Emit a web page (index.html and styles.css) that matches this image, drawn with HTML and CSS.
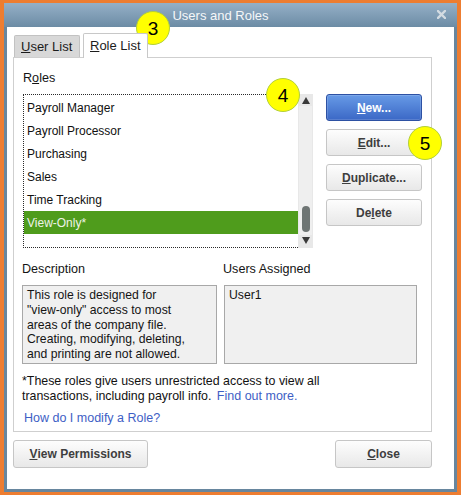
FILE: index.html
```html
<!DOCTYPE html>
<html>
<head>
<meta charset="utf-8">
<link rel="stylesheet" href="styles.css">
</head>
<body>
<div class="window">
  <div class="titlebar">
    <span class="title">Users and Roles</span>
    <svg class="close" width="9" height="9" viewBox="0 0 9 9"><path d="M1 1L8 8M8 1L1 8" stroke="#d3dbe2" stroke-width="2.4" stroke-linecap="square"/></svg>
  </div>
  <div class="content">
    <div class="tabs">
      <div class="tab"><u>U</u>ser List</div>
      <div class="tab active"><u>R</u>ole List</div>
    </div>
    <div class="panel">
      <div class="roles">
        <div class="roles-left">
          <div class="label">R<u>o</u>les</div>
          <div class="listbox">
            <div class="items">
              <div class="item">Payroll Manager</div>
              <div class="item">Payroll Processor</div>
              <div class="item">Purchasing</div>
              <div class="item">Sales</div>
              <div class="item">Time Tracking</div>
              <div class="item selected">View-Only*</div>
            </div>
            <div class="scrollbar">
              <div class="arrow up"></div>
              <div class="track"><div class="thumb"></div></div>
              <div class="arrow down"></div>
            </div>
          </div>
        </div>
        <div class="buttons">
          <div class="btn primary"><u>N</u>ew...</div>
          <div class="btn"><u>E</u>dit...</div>
          <div class="btn"><u>D</u>uplicate...</div>
          <div class="btn">De<u>l</u>ete</div>
        </div>
      </div>
      <div class="details">
        <div class="label">Description</div>
        <div class="label label2">Users Assigned</div>
        <div class="box">This role is designed for<br>"view-only" access to most<br>areas of the company file.<br>Creating, modifying, deleting,<br>and printing are not allowed.</div>
        <div class="box">User1</div>
      </div>
      <p class="note">*These roles give users unrestricted access to view all<br>transactions, including payroll info. <a class="link">Find out more.</a></p>
      <div class="help"><a class="link">How do I modify a Role?</a></div>
    </div>
    <div class="footer">
      <div class="btn wide"><u>V</u>iew Permissions</div>
      <div class="btn"><u>C</u>lose</div>
    </div>
  </div>
  <div class="callout c3">3</div>
  <div class="callout c4">4</div>
  <div class="callout c5">5</div>
</div>
</body>
</html>
```
FILE: styles.css
```css
* { box-sizing: border-box; }
html, body { margin: 0; padding: 0; }
body {
  background: #ed7d31;
  width: 461px;
  height: 495px;
  overflow: hidden;
  font-family: "Liberation Sans", Arial, sans-serif;
  font-size: 12px;
  color: #141414;
}
.window {
  position: relative;
  margin: 3px 4px 0 4px;
  width: 453px;
  height: 489px;
  background: #67869e;
  display: flex;
  flex-direction: column;
}
.titlebar {
  height: 24px;
  background: linear-gradient(#95b0c7, #6c8ca5);
  display: flex;
  align-items: center;
  justify-content: center;
  position: relative;
  padding-right: 20px;
}
.title {
  color: #f5f7f9;
  font-size: 13px;
}
.close {
  position: absolute;
  left: 433px;
  top: 7px;
}
.content {
  flex: 1;
  margin: 0 3px 3px 3px;
  background: #ffffff;
  padding: 6px 0 0 6px;
}
.tabs {
  display: flex;
  align-items: flex-end;
  gap: 3px;
  margin-left: 1px;
  height: 24px;
  position: relative;
  z-index: 1;
}
.tab {
  height: 22px;
  width: 66px;
  border: 1px solid #c2c2c2;
  border-bottom: none;
  border-radius: 2px 2px 0 0;
  background: #d8d8d8;
  font-size: 13px;
  line-height: 21px;
  padding-left: 6px;
  color: #1c1c1c;
}
.tab.active {
  height: 25px;
  width: 65px;
  margin-bottom: -1px;
  background: #ffffff;
  border-color: #c8c8c8;
  line-height: 24px;
}
.panel {
  width: 419px;
  height: 375px;
  border: 1px solid #cfcfcf;
  padding: 13px 0 0 8px;
}
.label {
  font-size: 12.6px;
  line-height: 15px;
  color: #141414;
}
.roles {
  display: flex;
}
.roles-left {
  width: 291px;
}
.roles-left .label {
  padding-left: 1px;
  margin-bottom: 8px;
}
.listbox {
  margin-left: 1px;
  width: 290px;
  height: 154px;
  display: flex;
}
.items {
  flex: 1;
  border: 1px dotted #2a2a2a;
  border-right: none;
  padding-top: 1px;
}
.item {
  height: 23px;
  line-height: 24px;
  padding-left: 3px;
  color: #101010;
}
.item.selected {
  background: #4f9c1c;
  color: #eef3e8;
}
.scrollbar {
  width: 15px;
  background: #e8e8e8;
  display: flex;
  flex-direction: column;
  align-items: center;
  padding: 3px 0 4px;
}
.arrow {
  width: 0;
  height: 0;
  border-left: 4px solid transparent;
  border-right: 4px solid transparent;
}
.arrow.up { border-bottom: 7px solid #3a3a3a; }
.arrow.down { border-top: 7px solid #3a3a3a; }
.track {
  flex: 1;
  width: 13px;
  background: #efefef;
  display: flex;
  flex-direction: column;
  justify-content: flex-end;
  align-items: center;
  padding: 2px 0 3px;
  margin: 2px 0;
}
.thumb {
  width: 8px;
  height: 26px;
  border-radius: 4px;
  background: #6e7574;
}
.buttons {
  margin-left: 13px;
  padding-top: 23px;
  display: flex;
  flex-direction: column;
  gap: 8px;
}
.btn {
  width: 96px;
  height: 27px;
  border: 1px solid #c6c6c6;
  border-radius: 3px;
  background: linear-gradient(#fdfdfd, #e8e8e8);
  display: flex;
  align-items: center;
  justify-content: center;
  font-weight: bold;
  font-size: 12px;
  color: #3e3e3e;
}
.btn.primary {
  background: linear-gradient(#679ae6, #3b68c6);
  border-color: #2d51a3;
  color: #ffffff;
  box-shadow: inset 0 0 0 1px rgba(255,255,255,0.15);
}
.details {
  margin-top: 14px;
  display: grid;
  grid-template-columns: 195px 193px;
  column-gap: 7px;
}
.details .label {
  margin-bottom: 8px;
}
.label2 { margin-left: -1px; }
.box {
  height: 79px;
  border: 1px solid #a8a8a8;
  background: #f0f0f0;
  padding: 2px 4px;
  line-height: 14.8px;
  font-size: 12.2px;
  color: #141414;
}
.note {
  margin: 10px 0 0 0;
  line-height: 15.3px;
  font-size: 12.4px;
  color: #111;
}
.link {
  color: #3e5ec5;
  margin-left: 2px;
  font-size: 12.5px;
}
.help {
  margin-top: 6px;
  line-height: 15px;
}
.help .link { margin-left: 2px; }
.footer {
  margin-top: 8px;
  width: 419px;
  display: flex;
  justify-content: space-between;
}
.footer .btn { height: 28px; width: 97px; }
.footer .btn.wide { width: 135px; }
.callout {
  position: absolute;
  width: 34px;
  height: 34px;
  border-radius: 50%;
  background: #ffff00;
  border: 1px solid #b3cf3a;
  display: flex;
  align-items: center;
  justify-content: center;
  font-size: 19px;
  color: #000;
  padding-top: 2px;
}
.c3 { left: 132px; top: 8px; }
.c4 { left: 262px; top: 75px; }
.c5 { left: 404px; top: 123px; }
```
